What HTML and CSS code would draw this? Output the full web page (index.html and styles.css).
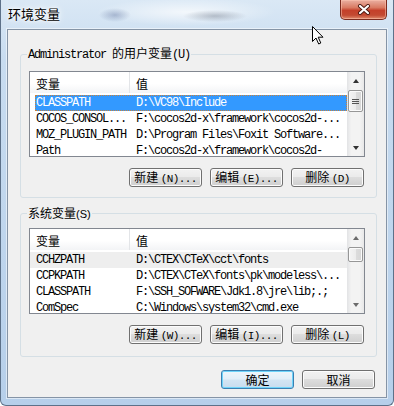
FILE: index.html
```html
<!DOCTYPE html>
<html lang="zh-CN">
<head>
  <meta charset="UTF-8" />
  <title>环境变量</title>
  <link rel="stylesheet" href="styles.css">
</head>
<body>
  <div class="window">

    <!-- Title bar -->
    <div class="titlebar">
      <span class="title">环境变量</span>
      <div class="close">
        <svg width="14" height="11" viewBox="0 0 14 11">
          <path d="M3 2 L11 9 M11 2 L3 9" stroke="#4a1810" stroke-width="4" stroke-linecap="round" />
          <path d="M3 2 L11 9 M11 2 L3 9" stroke="#fff" stroke-width="2.2" stroke-linecap="round" />
        </svg>
      </div>
    </div>

    <div class="client">

      <!-- User variables -->
      <fieldset class="group group-user">
        <legend><span class="mono">Administrator </span><span class="cn">的用户变量</span><span class="mono">(U)</span></legend>
        <div class="listbox">
          <div class="list">
            <div class="head">
              <div class="col-name">变量</div>
              <div class="col-val">值</div>
            </div>
            <div class="row selected"><div class="col-name">CLASSPATH</div><div class="col-val">D:\VC98\Include</div></div>
            <div class="row"><div class="col-name">COCOS_CONSOL...</div><div class="col-val">F:\cocos2d-x\framework\cocos2d-...</div></div>
            <div class="row"><div class="col-name">MOZ_PLUGIN_PATH</div><div class="col-val">D:\Program Files\Foxit Software...</div></div>
            <div class="row"><div class="col-name">Path</div><div class="col-val">F:\cocos2d-x\framework\cocos2d-</div></div>
          </div>
          <div class="scrollbar">
            <div class="sb-btn"><span class="arrow-up"></span></div>
            <div class="sb-track"><div class="thumb thumb-user"><span class="grip"></span></div></div>
            <div class="sb-btn"><span class="arrow-down"></span></div>
          </div>
        </div>
        <div class="buttons">
          <button class="btn">新建 <span class="mono">(N)...</span></button>
          <button class="btn">编辑 <span class="mono">(E)...</span></button>
          <button class="btn">删除 <span class="mono">(D)</span></button>
        </div>
      </fieldset>

      <!-- System variables -->
      <fieldset class="group group-sys">
        <legend><span class="cn">系统变量</span><span class="small">(S)</span></legend>
        <div class="listbox">
          <div class="list">
            <div class="head">
              <div class="col-name">变量</div>
              <div class="col-val">值</div>
            </div>
            <div class="row hot"><div class="col-name">CCHZPATH</div><div class="col-val">D:\CTEX\CTeX\cct\fonts</div></div>
            <div class="row"><div class="col-name">CCPKPATH</div><div class="col-val">D:\CTEX\CTeX\fonts\pk\modeless\...</div></div>
            <div class="row"><div class="col-name">CLASSPATH</div><div class="col-val">F:\SSH_SOFWARE\Jdk1.8\jre\lib;.;</div></div>
            <div class="row"><div class="col-name">ComSpec</div><div class="col-val">C:\Windows\system32\cmd.exe</div></div>
          </div>
          <div class="scrollbar light">
            <div class="sb-btn"><span class="arrow-up"></span></div>
            <div class="sb-track"><div class="thumb thumb-sys"></div></div>
            <div class="sb-btn"><span class="arrow-down"></span></div>
          </div>
        </div>
        <div class="buttons">
          <button class="btn">新建 <span class="mono">(W)...</span></button>
          <button class="btn">编辑 <span class="mono">(I)...</span></button>
          <button class="btn">删除 <span class="mono">(L)</span></button>
        </div>
      </fieldset>

      <div class="dialog-buttons">
        <button class="btn default">确定</button>
        <button class="btn">取消</button>
      </div>
    </div>

    <!-- mouse pointer -->
    <svg class="cursor" width="13" height="19" viewBox="0 0 13 19">
      <path d="M0.5 0.5 L0.5 15.5 L4 12 L6.7 18 L8.8 17 L6.2 11.2 L11 11.2 Z" fill="#fff" stroke="#000" stroke-width="1" stroke-linejoin="round" />
    </svg>
  </div>
</body>
</html>
```

FILE: styles.css
```css
body {
  margin: 0;
  background: #fff;
}

.window {
  position: relative;
  width: 394px;
  height: 406px;
  box-sizing: border-box;
  padding: 0 6px 7px;
  border: 1px solid #5d7189;
  border-top: none;
  border-radius: 0 0 6px 6px;
  display: flex;
  flex-direction: column;
  font-family: "Noto Sans CJK SC", sans-serif;
  background:
    radial-gradient(ellipse 16px 7px at 114px 15px, rgba(70, 90, 140, 0.35), transparent),
    radial-gradient(ellipse 32px 6px at 214px 16px, rgba(60, 70, 90, 0.3), transparent),
    radial-gradient(ellipse 90px 14px at 185px 12px, rgba(255, 255, 255, 0.7), transparent),
    linear-gradient(#dae8f5, #c8dcf0 60px, #b6cfea);
}

.titlebar {
  height: 29px;
  flex-shrink: 0;
  display: flex;
  justify-content: space-between;
  align-items: flex-start;
}

.title {
  margin-top: 5px;
  padding-left: 1px;
  font-size: 13px;
  line-height: 18px;
  color: #000;
  text-shadow: 0 0 4px #fff, 0 0 8px #fff, 0 0 2px #fff;
}

.close {
  width: 47px;
  height: 20px;
  box-sizing: border-box;
  border: 1px solid #7b2b1f;
  border-top: none;
  border-radius: 0 0 5px 5px;
  display: flex;
  align-items: center;
  justify-content: center;
  background: linear-gradient(#eab0a2, #d97a62 40%, #c4402a 55%, #c34a32 80%, #e08c6e);
  box-shadow: inset 0 0 0 1px rgba(255, 200, 180, 0.5);
}

.client {
  flex: 1;
  border: 1px solid #8594a6;
  background: #f0f0f0;
  box-shadow: 0 0 0 1px rgba(255, 255, 255, 0.5);
  display: flex;
  flex-direction: column;
}

.group {
  margin: 16px 9px 0 12px;
  padding: 9px 11px 10px 8px;
  border: 1px solid #d5dfe5;
  border-radius: 3px;
  min-width: 0;
}

.group-sys {
  margin-top: 8px;
  padding-top: 7px;
  padding-bottom: 12px;
}

legend {
  margin-left: -2px;
  padding: 0 1px;
  font-size: 12px;
  line-height: 14px;
  color: #000;
}

.mono {
  font-family: "Liberation Mono", monospace;
  font-size: 12px;
  letter-spacing: -1.2px;
}

.cn {
  font-family: "Noto Sans CJK SC", sans-serif;
  font-size: 12px;
}

.small {
  font-family: "Liberation Sans", sans-serif;
  font-size: 11px;
}

.listbox {
  display: flex;
  height: 86px;
  box-sizing: border-box;
  border: 1px solid #828790;
  background: #fff;
  overflow: hidden;
}

.list {
  flex: 1;
  min-width: 0;
  overflow: hidden;
}

.head {
  display: flex;
  height: 21px;
  margin-bottom: 2px;
  font-size: 12px;
  background: linear-gradient(#fff 55%, #f3f4f6);
}

.head .col-name,
.head .col-val {
  padding-top: 3px;
  line-height: 17px;
}

.head .col-name {
  border-right: 1px solid #e3e5e8;
}

.col-name {
  width: 100px;
  flex-shrink: 0;
  box-sizing: border-box;
  padding-left: 6px;
  overflow: hidden;
}

.col-val {
  padding-left: 6px;
}

.row {
  display: flex;
  height: 16px;
  line-height: 17px;
  font-family: "Liberation Mono", monospace;
  font-size: 12px;
  letter-spacing: -1.2px;
  white-space: nowrap;
  color: #000;
}

.row.selected {
  margin-left: 5px;
  background: #3399ff;
  color: #fff;
  outline: 1px dotted #c9823a;
  outline-offset: -1px;
}

.row.selected .col-name {
  width: 95px;
  padding-left: 1px;
}

.row.hot {
  background: #eeeeee;
}

.scrollbar {
  width: 17px;
  flex-shrink: 0;
  display: flex;
  flex-direction: column;
  background: linear-gradient(90deg, #e2e3e5, #f3f3f3 25%, #f3f3f3 75%, #e8e8e8);
}

.sb-btn {
  height: 17px;
  display: flex;
  align-items: center;
  justify-content: center;
}

.arrow-up,
.arrow-down {
  width: 0;
  height: 0;
  border-left: 3.5px solid transparent;
  border-right: 3.5px solid transparent;
}

.arrow-up {
  border-bottom: 4px solid #333;
}

.arrow-down {
  border-top: 4px solid #333;
}

.scrollbar.light .arrow-up {
  border-bottom-color: #6c6c6c;
}

.scrollbar.light .arrow-down {
  border-top-color: #6c6c6c;
}

.sb-track {
  flex: 1;
  padding-top: 1px;
}

.thumb {
  margin: 0 1px;
  box-sizing: border-box;
  border: 1px solid #979797;
  border-radius: 2px;
  display: flex;
  align-items: center;
  justify-content: center;
  background: linear-gradient(90deg, #f4f4f4, #ececec 50%, #dcdcdc 50%, #d6d6d6);
  box-shadow: inset 0 0 0 1px #fbfbfb;
}

.thumb-user {
  height: 22px;
}

.thumb-sys {
  height: 15px;
}

.grip {
  width: 7px;
  height: 5px;
  background: repeating-linear-gradient(#555 0 1px, transparent 1px 2px);
}

.buttons {
  display: flex;
  justify-content: flex-end;
  gap: 8px;
  margin-top: 11px;
  margin-right: 1px;
}

.btn {
  width: 73px;
  height: 19px;
  box-sizing: border-box;
  padding: 0;
  border: 1px solid #707070;
  border-radius: 3px;
  font-family: "Noto Sans CJK SC", sans-serif;
  font-size: 12px;
  line-height: 16px;
  color: #000;
  background: linear-gradient(#f2f2f2, #ebebeb 45%, #dddddd 50%, #cfcfcf);
  box-shadow: inset 0 0 0 1px #fcfcfc;
}

.btn .mono {
  font-size: 11px;
  letter-spacing: -0.6px;
}

.btn.default {
  border-color: #3c7fb1;
  background: linear-gradient(#eef6fb, #e3eff8 48%, #d3e5f3 52%, #c8dcee);
  box-shadow: inset 0 0 0 1px #6fd4f9;
}

.dialog-buttons {
  display: flex;
  justify-content: flex-end;
  gap: 8px;
  margin-top: 13px;
  padding-right: 11px;
}

.cursor {
  position: absolute;
  left: 311px;
  top: 26px;
}
```
